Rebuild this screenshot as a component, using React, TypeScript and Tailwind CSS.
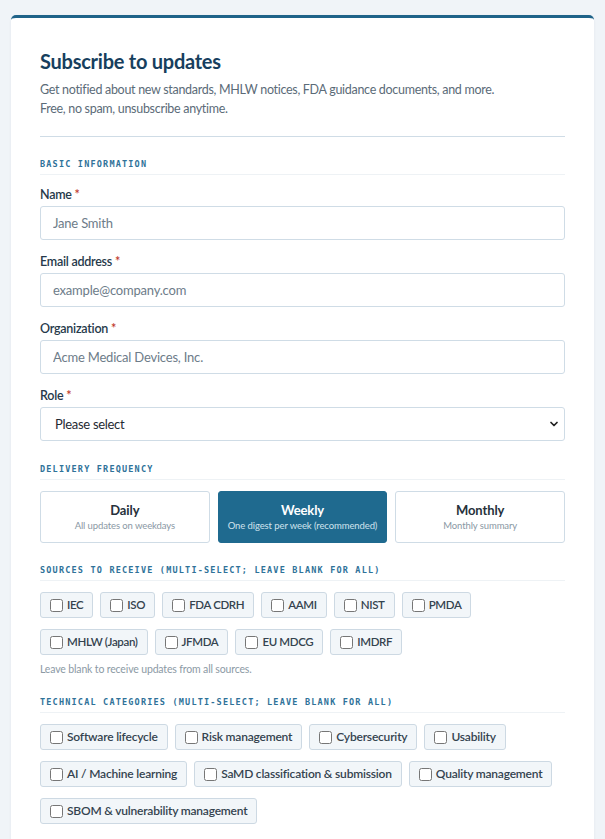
import { ChevronDown } from "lucide-react";

const SOURCES = ["IEC", "ISO", "FDA CDRH", "AAMI", "NIST", "PMDA", "MHLW (Japan)", "JFMDA", "EU MDCG", "IMDRF"];

const CATEGORIES = [
  "Software lifecycle",
  "Risk management",
  "Cybersecurity",
  "Usability",
  "AI / Machine learning",
  "SaMD classification & submission",
  "Quality management",
  "SBOM & vulnerability management",
];

const FREQUENCIES = [
  { label: "Daily", hint: "All updates on weekdays" },
  { label: "Weekly", hint: "One digest per week (recommended)" },
  { label: "Monthly", hint: "Monthly summary" },
];

function SectionTitle({ children, className = "" }: { children: React.ReactNode; className?: string }) {
  return (
    <div
      className={`border-b border-[#eef2f5] pb-[4px] font-['DejaVu_Sans_Mono',monospace] text-[8.5px] font-bold leading-[12px] tracking-[0.14em] text-[#2f7299] ${className}`}
    >
      {children}
    </div>
  );
}

function FieldLabel({ text }: { text: string }) {
  return (
    <span className="block text-[12.5px] font-semibold leading-[18px] tracking-[-0.25px] text-[#26394a]">
      {text} <span className="text-[#c0392b]">*</span>
    </span>
  );
}

function Field({ label, placeholder, className = "" }: { label: string; placeholder: string; className?: string }) {
  return (
    <label className={`block ${className}`}>
      <FieldLabel text={label} />
      <input
        placeholder={placeholder}
        className="mt-[2px] block h-[34px] w-full rounded-[3px] border border-[#cfdce6] bg-white px-[12px] text-[13px] tracking-[-0.2px] text-[#26394a] placeholder:text-[#6d7c89] focus:outline-none"
      />
    </label>
  );
}

// source codes are mostly capitals, so they get a slightly tighter face
function Chip({ text, caps = false }: { text: string; caps?: boolean }) {
  return (
    <label
      className={`inline-flex h-[26px] items-center gap-[4px] rounded-[3px] border border-[#cdd9e3] bg-[#f2f6f9] pl-[9px] pr-[9px] font-semibold text-[#34434f] ${
        caps ? "text-[11.5px] tracking-[-0.35px]" : "text-[12px] tracking-[-0.2px]"
      }`}
    >
      <input type="checkbox" className="m-0 h-[13px] w-[13px]" />
      <span>{text}</span>
    </label>
  );
}

export default function App() {
  return (
    <div className="min-h-screen bg-[#f0f4f8] px-[11px] pt-[15px] font-['Lato',sans-serif]">
      <div className="rounded-t-[5px] border-t-[3px] border-[#1f6389] bg-white px-[29px] pb-[40px] pt-[29px] shadow-[0_1px_3px_rgba(15,40,60,0.06)]">
        <h2 className="text-[20px] font-bold leading-[28px] tracking-[-0.25px] text-[#173f5e]">Subscribe to updates</h2>
        <p className="mt-[5px] text-[12.5px] leading-[19px] tracking-[-0.3px] text-[#5b6b78]">
          Get notified about new standards, MHLW notices, FDA guidance documents, and more.
          <br />
          Free, no spam, unsubscribe anytime.
        </p>

        <div className="mt-[18px] border-t border-[#cfdce6]" />

        <SectionTitle className="mt-[21px]">BASIC INFORMATION</SectionTitle>

        <Field className="mt-[11px]" label="Name" placeholder="Jane Smith" />
        <Field className="mt-[13px]" label="Email address" placeholder="example@company.com" />
        <Field className="mt-[13px]" label="Organization" placeholder="Acme Medical Devices, Inc." />

        <label className="mt-[13px] block">
          <FieldLabel text="Role" />
          <div className="relative mt-[2px]">
            <select className="block h-[34px] w-full appearance-none rounded-[3px] border border-[#cfdce6] bg-white pl-[14px] pt-[2px] text-[13px] tracking-[-0.3px] text-[#1f2a33] focus:outline-none">
              <option>Please select</option>
              <option>Regulatory affairs</option>
              <option>Quality assurance</option>
              <option>Engineering</option>
            </select>
            <ChevronDown className="pointer-events-none absolute right-[5px] top-[11px] h-[12px] w-[12px] text-[#222]" strokeWidth={3.5} />
          </div>
        </label>

        <SectionTitle className="mt-[22px]">DELIVERY FREQUENCY</SectionTitle>

        <div className="mt-[11px] grid grid-cols-3 gap-[8px]">
          {FREQUENCIES.map((f) => {
            const active = f.label === "Weekly";
            return (
              <button
                key={f.label}
                type="button"
                className={`flex h-[52px] flex-col items-center justify-center rounded-[3px] border ${
                  active ? "border-[#1f6a8f] bg-[#1f6a8f]" : "border-[#cfdce6] bg-white"
                }`}
              >
                <span className={`text-[13px] font-bold leading-[18px] tracking-[-0.1px] ${active ? "text-white" : "text-[#26313b]"}`}>
                  {f.label}
                </span>
                <span className={`text-[9.5px] leading-[14px] tracking-[-0.1px] ${active ? "text-[#cfe2ed]" : "text-[#8a98a4]"}`}>
                  {f.hint}
                </span>
              </button>
            );
          })}
        </div>

        <SectionTitle className="mt-[21px]">SOURCES TO RECEIVE (MULTI-SELECT; LEAVE BLANK FOR ALL)</SectionTitle>

        <div className="mt-[11px] flex flex-wrap gap-x-[7px] gap-y-[11px]">
          {SOURCES.map((s) => (
            <Chip key={s} text={s} caps />
          ))}
        </div>
        <p className="mt-[6px] text-[10.5px] leading-[16px] tracking-[-0.15px] text-[#8c9aa5]">
          Leave blank to receive updates from all sources.
        </p>

        <SectionTitle className="mt-[19px]">TECHNICAL CATEGORIES (MULTI-SELECT; LEAVE BLANK FOR ALL)</SectionTitle>

        <div className="mt-[11px] flex flex-wrap gap-x-[7px] gap-y-[11px]">
          {CATEGORIES.map((c) => (
            <Chip key={c} text={c} />
          ))}
        </div>
      </div>
    </div>
  );
}
